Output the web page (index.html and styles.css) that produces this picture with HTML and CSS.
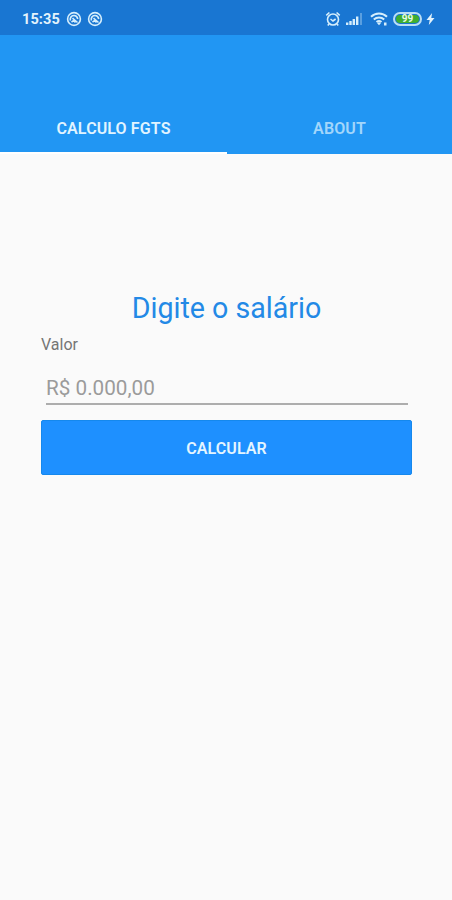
FILE: index.html
```html
<!DOCTYPE html>
<html lang="pt-BR">
<head>
<meta charset="utf-8">
<meta name="viewport" content="width=device-width, initial-scale=1">
<title>Calculo FGTS</title>
<link rel="stylesheet" href="styles.css">
</head>
<body>
<div class="status">
  <span class="time">15:35</span>
  <svg class="app" viewBox="0 0 16 16"><circle cx="8" cy="8" r="6.4"/><path d="M4.300 9.500V7.500Q5 4.500 8 4.500T11.800 8M6.500 7.200l5 4.300M5.500 11.200l2-1.700 2 2"/></svg>
  <svg class="app" viewBox="0 0 16 16"><circle cx="8" cy="8" r="6.4"/><path d="M4.300 9.500V7.500Q5 4.500 8 4.500T11.800 8M6.500 7.200l5 4.300M5.500 11.200l2-1.700 2 2"/></svg>
  <span class="spacer"></span>
  <svg class="alarm" viewBox="0 0 16 16"><circle cx="8" cy="8.500" r="5.500"/><path d="M1.300 4.300 4.400 1.500M14.700 4.300 11.600 1.500M5.500 8l2.500 2 2.600-2M4 13l-1.200 1.500M12 13l1.200 1.500"/></svg>
  <svg class="signal" viewBox="0 0 17 12"><path d="M0 9.500h2.400V12H0zM3.300 8h2.400v4H3.300zM6.600 6H9v6H6.600zM10 3.500h2.400V12H10z"/><path class="dim" d="M14 0h2v12h-2z"/></svg>
  <svg class="wifi" viewBox="0 0 18 14"><path d="M1 4.700C5.500.4 12.500.4 17 4.700M3.800 7.500c3-2.800 7.400-2.800 10.400 0M6.500 10.100c1.500-1.300 3.500-1.300 5 0"/><path class="solid" d="m7 11 2 2.300 2-2.300q-2-1.300-4 0zM14 10.500h2.500v3H14z"/></svg>
  <span class="battery">99</span>
  <svg class="bolt" viewBox="0 0 8 12"><path d="M5.600 0 0 6.900h3.200L2.300 12 8 5H4.800z"/></svg>
</div>
<header class="bar">
  <nav class="tabs">
    <a class="tab active">CALCULO FGTS</a>
    <a class="tab">ABOUT</a>
  </nav>
</header>
<main class="content">
  <h1 class="title">Digite o salário</h1>
  <label class="label" for="valor">Valor</label>
  <input class="field" id="valor" type="text" placeholder="R$ 0.000,00">
  <button class="button" type="button">CALCULAR</button>
</main>
</body>
</html>
```
FILE: styles.css
```css
* { box-sizing: border-box; }
body {
  margin: 0;
  height: 900px;
  background: #fafafa;
  font-family: Roboto, sans-serif;
  overflow: hidden;
}
.status {
  display: flex;
  align-items: center;
  height: 35px;
  padding: 3px 17px 0 22px;
  background: #1976d2;
  color: #e3f3fc;
}
.status svg { flex: none; fill: none; stroke: #d5eefc; }
.time { width: 44px; font-size: 14.5px; font-weight: 700; line-height: 17px; letter-spacing: .1px; }
.app { width: 16px; height: 16px; margin-right: 5px; stroke-width: 1.6; }
.spacer { flex: 1; }
.status .alarm { width: 16px; height: 16px; margin-right: 5px; stroke-width: 1.6; }
.status .signal { width: 17px; height: 12px; margin-right: 7px; fill: #d5eefc; stroke: none; }
.signal .dim { opacity: .35; }
.status .wifi { width: 18px; height: 14px; margin-right: 5px; stroke-width: 2; }
.wifi .solid { fill: #d5eefc; stroke: none; }
.battery {
  width: 29px;
  height: 14px;
  margin-right: 4px;
  padding: 1px;
  border: 2px solid #b9def5;
  border-radius: 7px;
  background: #3fae2f content-box;
  color: #e8fbe6;
  font-size: 10px;
  font-weight: 700;
  line-height: 8px;
  text-align: center;
}
.status .bolt { width: 9px; height: 12px; fill: #e3f3fc; stroke: none; }
.bar {
  display: flex;
  align-items: flex-end;
  height: 119px;
  background: #2196f3;
}
.tabs { display: flex; width: 100%; height: 54px; }
.tab {
  flex: 1;
  padding-top: 19px;
  color: #a3d6fb;
  font-size: 16px;
  font-weight: 600;
  line-height: 20px;
  letter-spacing: .12px;
  text-align: center;
}
.tab.active { flex: 0 0 227px; border-bottom: 2px solid #fff; color: #e1f4ff; }
.content { display: flex; flex-direction: column; padding: 135px 40px 0 41px; }
.title {
  margin: 0;
  color: #2389e6;
  font-size: 28.6px;
  font-weight: 400;
  line-height: 38px;
  text-align: center;
}
.label { margin-top: 8px; color: #757575; font-size: 16px; line-height: 20px; }
.field {
  height: 37px;
  margin: 13px 4px 0 5px;
  padding: 4px 0 0;
  border: 0;
  border-bottom: 2px solid #adadad;
  background: transparent;
  color: #212121;
  font: 400 20.7px/28px Roboto, sans-serif;
  outline: 0;
}
.field::placeholder { color: #9b9b9b; opacity: 1; }
.button {
  height: 55px;
  margin-top: 15px;
  padding: 2px 0 0;
  border: 1px solid #1588ed;
  border-radius: 2px;
  background: #1e90ff;
  color: #e4f5ff;
  font: 600 16px/20px Roboto, sans-serif;
  letter-spacing: .1px;
}
```
